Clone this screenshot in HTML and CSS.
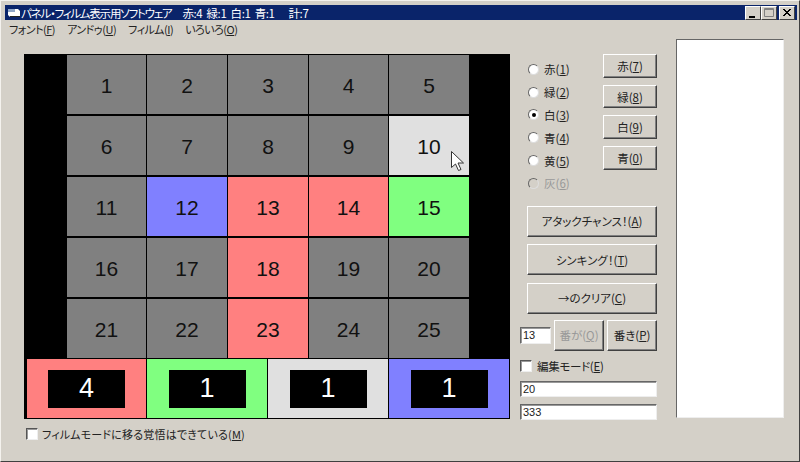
FILE: index.html
```html
<!DOCTYPE html>
<html>
<head>
<meta charset="utf-8">
<meta name="viewport" content="width=device-width, initial-scale=1">
<link rel="stylesheet" href="styles.css">
</head>
<body>

<div class="window">
  <div class="titlebar">
    <svg class="appicon" width="15" height="14" viewBox="0 0 15 14">
      <path d="M2 3h10l2 2v6H4L2 9z" fill="#fff"/>
      <path d="M2 3h7v3H2z" fill="#8fa6c8"/>
      <path d="M4 10h10v1H4z" fill="#222"/>
    </svg>
    <span class="title">パネル・フィルム表示用ソフトウェア</span>
    <span class="title-score">赤:4 緑:1 白:1 青:1</span>
    <span class="title-total">計:7</span>
    <div class="winbuttons">
      <div class="winbtn"><svg width="14" height="12" viewBox="0 0 14 12"><path d="M3 9h6v2H3z" fill="#000"/></svg></div>
      <div class="winbtn"><svg width="14" height="12" viewBox="0 0 14 12"><path d="M2.500 1.500h9v8h-9zM2.500 2.500h9" fill="none" stroke="#808080"/></svg></div>
      <div class="winbtn close"><svg width="14" height="12" viewBox="0 0 14 12"><path d="M3 2l7 7M4 2l7 7M10 2l-7 7M11 2l-7 7" stroke="#000" fill="none"/></svg></div>
    </div>
  </div>

  <div class="menubar">
    <span>フォント(<u>F</u>)</span>
    <span>アンドゥ(<u>U</u>)</span>
    <span>フィルム(<u>I</u>)</span>
    <span>いろいろ(<u>O</u>)</span>
  </div>

  <div class="content">
    <div class="left">
      <div class="board">
        <div class="cells">
          <div class="cell">1</div>
          <div class="cell">2</div>
          <div class="cell">3</div>
          <div class="cell">4</div>
          <div class="cell">5</div>
          <div class="cell">6</div>
          <div class="cell">7</div>
          <div class="cell">8</div>
          <div class="cell">9</div>
          <div class="cell white">10
            <svg class="cursor" width="15" height="22" viewBox="0 0 15 22">
              <path d="M1.500 1.500v16l4-3.500 3 6.500 2.500-1-3-6.500h5.500z" fill="#fff" stroke="#333"/>
            </svg>
          </div>
          <div class="cell">11</div>
          <div class="cell blue">12</div>
          <div class="cell red">13</div>
          <div class="cell red">14</div>
          <div class="cell green">15</div>
          <div class="cell">16</div>
          <div class="cell">17</div>
          <div class="cell red">18</div>
          <div class="cell">19</div>
          <div class="cell">20</div>
          <div class="cell">21</div>
          <div class="cell">22</div>
          <div class="cell red">23</div>
          <div class="cell">24</div>
          <div class="cell">25</div>
        </div>
        <div class="scores">
          <div class="score red"><div class="count">4</div></div>
          <div class="score green"><div class="count">1</div></div>
          <div class="score white"><div class="count">1</div></div>
          <div class="score blue"><div class="count">1</div></div>
        </div>
      </div>
      <label class="check film"><span class="box"></span><span>フィルムモードに移る覚悟はできている(<u>M</u>)</span></label>
    </div>

    <div class="side">
      <div class="colors">
        <div class="radios">
          <label class="radio"><span class="dot"></span><span>赤(<u>1</u>)</span></label>
          <label class="radio"><span class="dot"></span><span>緑(<u>2</u>)</span></label>
          <label class="radio"><span class="dot on"></span><span>白(<u>3</u>)</span></label>
          <label class="radio"><span class="dot"></span><span>青(<u>4</u>)</span></label>
          <label class="radio"><span class="dot"></span><span>黄(<u>5</u>)</span></label>
          <label class="radio off"><span class="dot"></span><span>灰(<u>6</u>)</span></label>
        </div>
        <div class="colorbtns">
          <div class="btn small"><span>赤(<u>7</u>)</span></div>
          <div class="btn small"><span>緑(<u>8</u>)</span></div>
          <div class="btn small"><span>白(<u>9</u>)</span></div>
          <div class="btn small"><span>青(<u>0</u>)</span></div>
        </div>
      </div>
      <div class="actions">
        <div class="btn big"><span>アタックチャンス！(<u>A</u>)</span></div>
        <div class="btn big"><span>シンキング！(<u>T</u>)</span></div>
        <div class="btn big"><span>→のクリア(<u>C</u>)</span></div>
      </div>
      <div class="numrow">
        <div class="field num">13</div>
        <div class="btn turn off"><span>番が(<u>Q</u>)</span></div>
        <div class="btn turn"><span>番き(<u>P</u>)</span></div>
      </div>
      <label class="check edit"><span class="box"></span><span>編集モード(<u>E</u>)</span></label>
      <div class="field wide first">20</div>
      <div class="field wide">333</div>
    </div>

    <div class="list"></div>
  </div>
</div>

</body>
</html>
```

FILE: styles.css
```css
* {
  box-sizing: border-box;
}

html, body {
  margin: 0;
  height: 100%;
  overflow: hidden;
}

body {
  font-family: "Noto Sans CJK JP", "Liberation Sans", sans-serif;
  font-size: 11px;
  font-feature-settings: "palt";
  color: #000;
}

u {
  text-underline-offset: 1px;
}

/* Window frame */
.window {
  width: 800px;
  height: 462px;
  padding: 3px;
  background: #d4d0c8;
  border: 1px solid;
  border-color: #f4f2ee #404040 #404040 #f4f2ee;
  display: flex;
  flex-direction: column;
}

.titlebar {
  height: 15px;
  margin: 1px -1px 0 1px;
  padding-left: 1px;
  background: #0a246a;
  color: #fff;
  display: flex;
  align-items: center;
  font-size: 11.500px;
  white-space: nowrap;
}

.title {
  letter-spacing: -1.200px;
}

.title-score {
  margin-left: 11px;
  letter-spacing: -0.400px;
  word-spacing: 2px;
}

.title-total {
  margin-left: 14px;
  letter-spacing: -0.400px;
}

.winbuttons {
  margin-left: auto;
  margin-right: 2px;
  display: flex;
}

.winbtn {
  width: 16px;
  height: 14px;
  background: #d4d0c8;
  border: 1px solid;
  border-color: #fff #404040 #404040 #fff;
  display: flex;
  align-items: center;
  justify-content: center;
}

.winbtn svg {
  flex: none;
}

.close {
  margin-left: 2px;
}

.menubar {
  height: 18px;
  padding-left: 5px;
  display: flex;
  align-items: center;
  gap: 12px;
  font-size: 11px;
  letter-spacing: -0.500px;
  color: #222;
}

/* Main area */
.content {
  display: flex;
  align-items: flex-start;
  padding-left: 20px;
}

.left {
  width: 486px;
  margin-top: 16px;
}

.board {
  height: 365px;
  padding-top: 1px;
  background: #000;
}

.cells {
  padding-left: 43px;
  display: grid;
  grid-template-columns: 79px 80px 80px 79px 80px;
  grid-auto-rows: 59px;
  column-gap: 1px;
  row-gap: 2px;
}

.cell {
  position: relative;
  padding-top: 2px;
  background: #808080;
  display: flex;
  align-items: center;
  justify-content: center;
  font-family: "Liberation Sans", sans-serif;
  font-size: 21px;
  color: #111;
}

.red {
  background: #ff8080;
}

.green {
  background: #80ff80;
}

.blue {
  background: #8080ff;
}

.white {
  background: #e0e0e0;
}

.cursor {
  position: absolute;
  left: 61px;
  top: 34px;
}

.scores {
  display: grid;
  grid-template-columns: 119px 120px 120px 120px;
  column-gap: 1px;
  margin-top: 1px;
  padding-left: 3px;
  height: 59px;
}

.score {
  display: flex;
  align-items: center;
  justify-content: center;
}

.count {
  width: 77px;
  height: 38px;
  background: #000;
  color: #fff;
  font-family: "Liberation Sans", sans-serif;
  font-size: 27px;
  display: flex;
  align-items: center;
  justify-content: center;
}

/* Check boxes and radio buttons */
.check {
  display: flex;
  align-items: center;
  color: #222;
}

.box {
  width: 12px;
  height: 12px;
  background: #fff;
  border: 1px solid;
  border-color: #555 #eee #eee #555;
  box-shadow: inset 1px 1px 0 #999;
}

.film {
  margin-top: 8px;
  margin-left: 2px;
  gap: 4px;
  height: 14px;
  letter-spacing: 0.200px;
}

.edit {
  margin-top: 8px;
  height: 14px;
  gap: 5px;
  font-size: 11.500px;
  letter-spacing: -0.300px;
}

.side {
  width: 137px;
  margin-top: 16px;
  margin-left: 10px;
}

.colors {
  display: flex;
  justify-content: space-between;
}

.radios {
  padding-top: 4px;
  padding-left: 8px;
}

.radio {
  height: 22.800px;
  display: flex;
  align-items: center;
  gap: 5px;
  font-size: 11.500px;
  color: #222;
}

.radio.off {
  color: #999;
}

.dot {
  width: 11px;
  height: 11px;
  border-radius: 50%;
  background: #fff;
  border: 1px solid;
  border-color: #666 #ddd #ddd #666;
  display: flex;
  align-items: center;
  justify-content: center;
}

.off .dot {
  background: #d4d0c8;
}

.dot.on:after {
  content: "";
  width: 4px;
  height: 4px;
  border-radius: 50%;
  background: #000;
}

.colorbtns {
  display: flex;
  flex-direction: column;
  gap: 7px;
}

/* Buttons */
.btn {
  background: #d4d0c8;
  border: 1px solid;
  border-color: #fff #404040 #404040 #fff;
  box-shadow: inset -1px -1px 0 #808080;
  display: flex;
  align-items: center;
  justify-content: center;
  font-size: 11.500px;
  color: #222;
}

.btn.off {
  color: #999;
}

.small {
  width: 54px;
  height: 23.700px;
}

.actions {
  margin-top: 11px;
  margin-left: 7px;
  display: flex;
  flex-direction: column;
  gap: 7.500px;
}

.big {
  height: 31px;
}

.numrow {
  margin-top: 6px;
  display: flex;
  align-items: center;
  gap: 3px;
}

.turn {
  width: 50px;
  height: 31px;
}

.field {
  background: #fff;
  border: 1px solid;
  border-color: #666 #eee #eee #666;
  box-shadow: inset 1px 1px 0 #999;
  font-family: "Liberation Sans", sans-serif;
  font-size: 11px;
  line-height: 14px;
  padding-left: 2px;
  color: #222;
}

.num {
  width: 31px;
  height: 17px;
}

.wide {
  height: 16px;
  margin-top: 7px;
}

.wide.first {
  margin-top: 8px;
}

.list {
  width: 108px;
  height: 379px;
  margin-top: 1px;
  margin-left: 19px;
  background: #fff;
  border: 1px solid;
  border-color: #666 #eee #eee #666;
}
```
